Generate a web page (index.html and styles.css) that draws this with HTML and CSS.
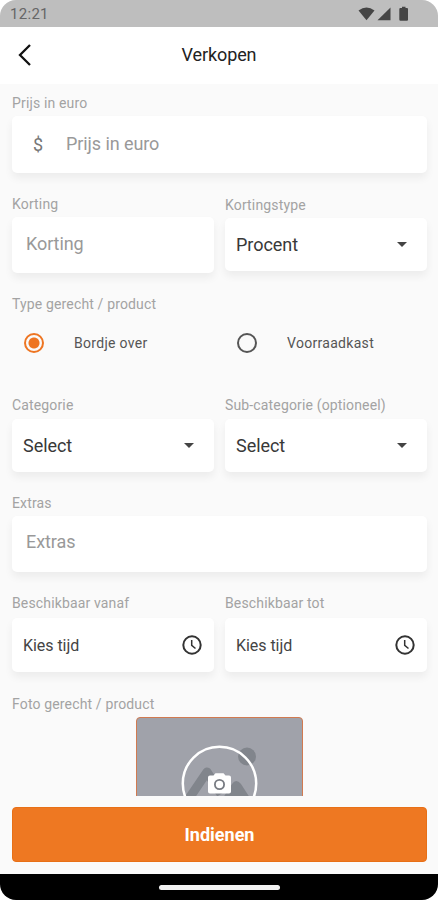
FILE: index.html
```html
<!DOCTYPE html>
<html lang="nl">
<head>
<meta charset="utf-8">
<title>Verkopen</title>
<link rel="stylesheet" href="styles.css">
</head>
<body>
<div class="phone">
  <div class="status">
    <span class="time">12:21</span>
    <svg class="status-icons" width="52" height="16" viewBox="0 0 52 16">
      <path d="M0.5 4.5Q8.500-1.500 16.500 4.500L8.500 14.300Z"/>
      <path d="M32.500 1.500V14.300H19.500Z"/>
      <path d="M42.500 2H44V0.800H47.500V2H49Q50 2 50 3V13.500Q50 14.800 49 14.800H42.500Q41.300 14.800 41.300 13.500V3Q41.300 2 42.500 2Z"/>
    </svg>
  </div>
  <header class="header">
    <svg class="back" width="14" height="22" viewBox="0 0 14 22"><path d="M12 1L2 11L12 21"/></svg>
    <h1>Verkopen</h1>
  </header>
  <main class="form">
    <section class="field">
      <label>Prijs in euro</label>
      <div class="card input"><span class="dollar">$</span><span>Prijs in euro</span></div>
    </section>
    <div class="row discount">
      <section class="field">
        <label>Korting</label>
        <div class="card input">Korting</div>
      </section>
      <section class="field type">
        <label>Kortingstype</label>
        <div class="card select"><span>Procent</span><i class="caret"></i></div>
      </section>
    </div>
    <section class="field kind">
      <label>Type gerecht / product</label>
      <div class="row radios">
        <div class="option"><i class="radio on"></i><span>Bordje over</span></div>
        <div class="option"><i class="radio"></i><span>Voorraadkast</span></div>
      </div>
    </section>
    <div class="row categories">
      <section class="field">
        <label>Categorie</label>
        <div class="card select"><span>Select</span><i class="caret"></i></div>
      </section>
      <section class="field">
        <label>Sub-categorie (optioneel)</label>
        <div class="card select"><span>Select</span><i class="caret"></i></div>
      </section>
    </div>
    <section class="field extras">
      <label>Extras</label>
      <div class="card input">Extras</div>
    </section>
    <div class="row times">
      <section class="field">
        <label>Beschikbaar vanaf</label>
        <div class="card pick"><span>Kies tijd</span>
          <svg width="20" height="20" viewBox="0 0 20 20"><circle cx="10" cy="10" r="8.700"/><path d="M9.700 5V10.300L13.500 13.500"/></svg>
        </div>
      </section>
      <section class="field">
        <label>Beschikbaar tot</label>
        <div class="card pick"><span>Kies tijd</span>
          <svg width="20" height="20" viewBox="0 0 20 20"><circle cx="10" cy="10" r="8.700"/><path d="M9.700 5V10.300L13.500 13.500"/></svg>
        </div>
      </section>
    </div>
    <section class="field photo-field">
      <label>Foto gerecht / product</label>
      <div class="photo">
        <svg width="165" height="78" viewBox="0 0 165 78">
          <circle cx="110" cy="38.500" r="9" fill="#81858c"/>
          <path d="M51 82L70 54L84 76" fill="none" stroke="#81858c" stroke-width="9" stroke-linejoin="round"/>
          <path d="M84 83L95 66Q99 60 104 66L115 83Z" fill="#81858c"/>
          <circle cx="82.500" cy="65.500" r="36.700" fill="none" stroke="#fff" stroke-width="2.500"/>
          <path fill="#fff" d="M73 57.500H76.500L78.500 55.200H86.500L88.500 57.500H92Q94 57.500 94 59.500V73.500Q94 75.500 92 75.500H73Q71 75.500 71 73.500V59.500Q71 57.500 73 57.500Z"/>
          <circle cx="82.500" cy="66.500" r="4.600" fill="#fff" stroke="#777b82" stroke-width="1.800"/>
        </svg>
      </div>
    </section>
  </main>
  <footer class="actions"><button>Indienen</button></footer>
  <div class="nav"><i></i></div>
</div>
</body>
</html>
```
FILE: styles.css
```css
* { box-sizing: border-box; }
body { margin: 0; background: #fff; font-family: Roboto, "Liberation Sans", sans-serif; }
.phone { width: 438px; height: 900px; display: flex; flex-direction: column; overflow: hidden; border-radius: 16px; background: #fafafa; }
.status { height: 27px; flex: none; background: #bebebe; display: flex; align-items: center; justify-content: space-between; padding: 1px 28px 0 10px; }
.time { font-size: 15px; letter-spacing: 0.3px; color: #666; }
.status-icons { fill: #454545; }
.header { height: 57px; flex: none; background: #fff; display: grid; grid-template-columns: 1fr auto 1fr; align-items: center; padding: 0 18px 2px; }
.back { fill: none; stroke: #111; stroke-width: 2.3; }
h1 { margin: 0; font-size: 18px; font-weight: 400; letter-spacing: -0.1px; color: #222; }
.form { height: 712px; flex: none; overflow: hidden; padding: 11px 11px 0 12px; }
.row { display: grid; grid-template-columns: 202px 202px; column-gap: 11px; }
label { display: block; height: 16px; margin-bottom: 5px; line-height: 16px; font-size: 14px; letter-spacing: 0.15px; color: #a3a3a3; white-space: nowrap; }
.card { height: 57px; display: flex; align-items: center; background: #fff; border-radius: 5px; box-shadow: 0 5px 8px rgba(0, 0, 0, 0.06); }
.input { padding: 0 14px 3px; font-size: 18px; letter-spacing: -0.08px; color: #999; }
.dollar { width: 40px; padding: 3px 0 0 7px; color: #777; }
.discount { margin-top: 23px; }
.discount .input { height: 56px; }
.type { padding-top: 1px; }
.select { height: 53px; justify-content: space-between; padding: 0 20px 0 11px; font-size: 18px; letter-spacing: -0.05px; color: #383838; }
.caret { border: 5px solid transparent; border-top-color: #444; border-bottom: 0; }
.kind { margin-top: 23px; }
.radios { height: 38px; margin-top: 12px; }
.option { display: flex; align-items: center; padding-left: 12px; font-size: 14px; letter-spacing: 0.3px; color: #555; }
.radio { width: 20px; height: 20px; margin-right: 30px; border: 2px solid #555; border-radius: 50%; }
.radio.on { border-color: #ee7522; background: radial-gradient(circle, #ee7522 5px, transparent 6px); }
.categories { margin-top: 35px; }
.categories .select { margin-top: 6px; }
.extras { margin-top: 23px; }
.extras .card { height: 56px; padding-bottom: 6px; }
.times { margin-top: 23px; }
.pick { height: 54px; margin-top: 7px; justify-content: space-between; padding: 0 12px 0 11px; font-size: 16px; letter-spacing: -0.05px; color: #444; }
.pick svg { fill: none; stroke: #333; stroke-width: 2; }
.pick path { stroke-width: 1.5; }
.photo-field { margin-top: 24px; }
.photo { width: 167px; height: 110px; margin: 0 0 0 124px; border: 1px solid #d17a50; border-radius: 4px; background: #a0a2aa; }
.photo svg { display: block; }
.actions { height: 78px; flex: none; padding: 11px 11px 12px 12px; }
button { width: 100%; height: 55px; border: 1px solid #e87017; border-radius: 4px; background: #ee7822; color: #fff; font-family: inherit; font-size: 18px; font-weight: 700; }
.nav { height: 26px; flex: none; display: flex; justify-content: center; align-items: center; background: #000; }
.nav i { width: 121px; height: 5px; border-radius: 3px; background: #f2f2f2; }
```
